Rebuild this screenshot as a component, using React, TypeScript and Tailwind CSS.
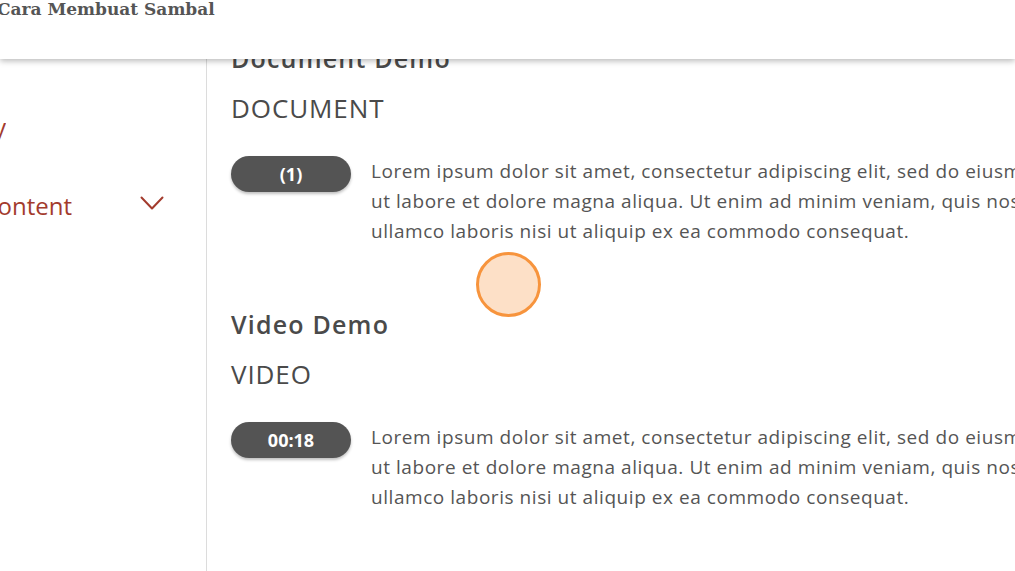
import React from "react";

const lines = [
  "Lorem ipsum dolor sit amet, consectetur adipiscing elit, sed do eiusmod tempor incididunt",
  "ut labore et dolore magna aliqua. Ut enim ad minim veniam, quis nostrud exercitation",
  "ullamco laboris nisi ut aliquip ex ea commodo consequat.",
];

function Section({ title, kind, badge, first }: { title: string; kind: string; badge: string; first?: boolean }) {
  return (
    <section className={first ? "" : "mt-[62px]"}>
      <h2 className="text-[25px] leading-[32px] font-semibold text-[#4a4a4a] whitespace-nowrap tracking-[1.2px]">{title}</h2>
      <p className="mt-[18px] text-[26px] leading-[32px] font-normal text-[#4a4a4a] whitespace-nowrap tracking-[0.9px]">{kind}</p>
      <div className="mt-[32px] flex items-start gap-[20px]">
        <div className="w-[120px] h-[36px] shrink-0 rounded-full bg-[#545454] shadow-[0_2px_3px_rgba(0,0,0,0.25)] flex items-center justify-center text-white font-bold text-[18px]">
          {badge}
        </div>
        <p className="shrink-0 text-[19px] leading-[30px] text-[#555] tracking-[0.55px]">
          {lines.map((l) => (
            <span key={l} className="block whitespace-nowrap">
              {l}
            </span>
          ))}
        </p>
      </div>
    </section>
  );
}

export default function App() {
  return (
    <div className="relative h-[571px] w-[1015px] overflow-hidden bg-white font-['Open_Sans',sans-serif]">
      <header className="absolute inset-x-0 top-0 z-10 h-[59px] bg-white shadow-[0_2px_6px_rgba(0,0,0,0.28)]">
        <div className="-ml-[3px] -mt-[1px] font-['DejaVu_Serif',serif] font-bold text-[17px] leading-[20px] text-[#555] whitespace-nowrap">
          Cara Membuat Sambal
        </div>
      </header>
      <div className="flex h-full">
        <aside className="w-[207px] shrink-0 border-r border-[#dcdcdc] pt-[111px] text-[24px] leading-[32px] text-[#a33b2d]">
          <div className="flex w-[6px] justify-end overflow-hidden">
            <span className="whitespace-nowrap">Summary</span>
          </div>
          <div className="mt-[47px] flex items-center">
            <div className="flex w-[72px] justify-end overflow-hidden">
              <span className="whitespace-nowrap">Content</span>
            </div>
            <svg className="ml-[68px] -mt-[6px]" width="24" height="15" viewBox="0 0 24 15" fill="none">
              <polyline points="1.5,1.5 12,12.5 22.5,1.5" stroke="#a33b2d" strokeWidth="2" strokeLinecap="round" strokeLinejoin="round" />
            </svg>
          </div>
        </aside>
        <main className="pl-[24px] pt-[42px] min-w-0 overflow-hidden">
          <Section first title="Document Demo" kind="DOCUMENT" badge="(1)" />
          <Section title="Video Demo" kind="VIDEO" badge="00:18" />
        </main>
      </div>
      <div className="absolute left-[476px] top-[252px] z-20 h-[65px] w-[65px] rounded-full border-[3px] border-[#f7943d] bg-[#fde0c7]" />
    </div>
  );
}
